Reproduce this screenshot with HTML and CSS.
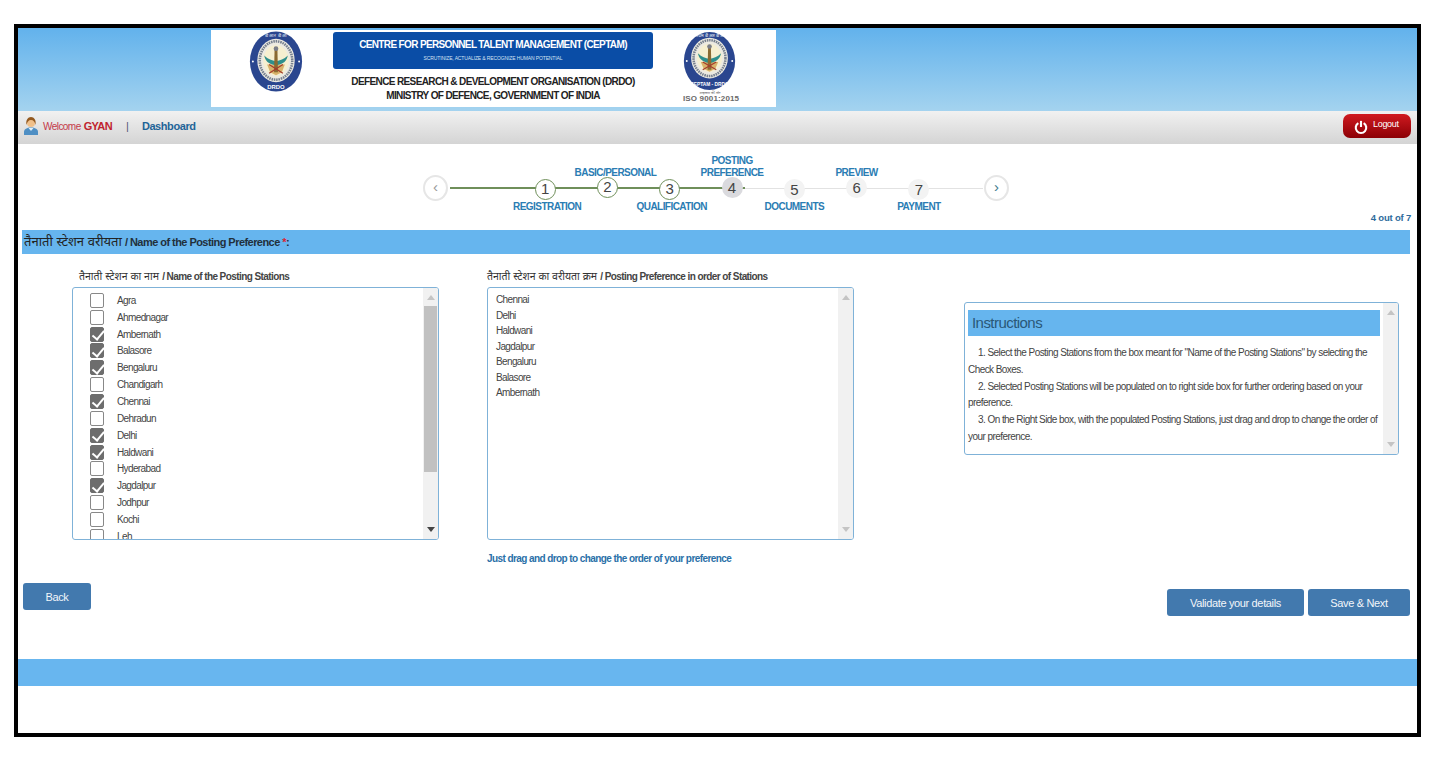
FILE: index.html
```html
<!DOCTYPE html>
<html lang="hi">
<head>
<meta charset="utf-8">
<title>Posting Preference</title>
<link rel="stylesheet" href="styles.css">
</head>
<body>
<div class="frame">
  <header class="banner">
    <div class="logo-box">
      <svg class="emblem" viewBox="0 0 54 62">
        <ellipse cx="27" cy="31" rx="26.5" ry="30.5" fill="#2a468f"/>
        <circle cx="3.5" cy="31" r="1" fill="#fff"/><circle cx="50.5" cy="31" r="1" fill="#fff"/>
        <ellipse cx="27" cy="30" rx="19" ry="22" fill="#eceae2"/>
        <ellipse cx="27" cy="30" rx="16.5" ry="19.5" fill="none" stroke="#77808f" stroke-width="2.6" stroke-dasharray="1.6 .8"/>
        <ellipse cx="27" cy="30" rx="13" ry="15.5" fill="#f6efd0"/>
        <path d="M18 34h18l-3 8-6 3-6-3z" fill="#d8b26a"/>
        <path d="M15 25c4 4 8 5 12 6 4-1 8-2 12-6-1 5-4 9-12 10-8-1-11-5-12-10z" fill="#2f8f8c"/>
        <path d="M25.6 17h2.8l.6 25h-4z" fill="#8a6a32"/>
        <circle cx="27" cy="18" r="2.4" fill="#7a7d88"/>
        <path d="M20 43l14-9M34 43l-14-9" stroke="#a33b2c" stroke-width="1.2"/>
        <text x="27" y="59" class="emblem-text" text-anchor="middle">DRDO</text>
        <text x="27" y="6.5" class="emblem-text tiny" text-anchor="middle">डी आर डी ओ</text>
      </svg>
      <div class="titles">
        <div class="title-blue">
          <div class="title-main">CENTRE FOR PERSONNEL TALENT MANAGEMENT (CEPTAM)</div>
          <div class="title-tag">SCRUTINIZE, ACTUALIZE &amp; RECOGNIZE HUMAN POTENTIAL</div>
        </div>
        <div class="title-org">DEFENCE RESEARCH &amp; DEVELOPMENT ORGANISATION (DRDO)<br>MINISTRY OF DEFENCE, GOVERNMENT OF INDIA</div>
      </div>
      <div class="iso">
        <svg class="emblem emblem-small" viewBox="0 0 54 62">
          <ellipse cx="27" cy="31" rx="26.5" ry="30" fill="#2a468f"/>
          <circle cx="3.5" cy="31" r="1" fill="#fff"/><circle cx="50.5" cy="31" r="1" fill="#fff"/>
          <ellipse cx="27" cy="28" rx="19" ry="21" fill="#eceae2"/>
          <ellipse cx="27" cy="28" rx="16.5" ry="18.5" fill="none" stroke="#77808f" stroke-width="2.6" stroke-dasharray="1.6 .8"/>
          <ellipse cx="27" cy="28" rx="13" ry="14.5" fill="#f6efd0"/>
          <path d="M18 32h18l-3 7-6 3-6-3z" fill="#d8b26a"/>
          <path d="M15 23c4 4 8 5 12 6 4-1 8-2 12-6-1 5-4 9-12 10-8-1-11-5-12-10z" fill="#2f8f8c"/>
          <path d="M25.6 15h2.8l.6 25h-4z" fill="#8a6a32"/>
          <circle cx="27" cy="16" r="2.4" fill="#7a7d88"/>
          <path d="M20 40l14-8M34 40l-14-8" stroke="#a33b2c" stroke-width="1.2"/>
          <text x="27" y="57" class="emblem-text small" text-anchor="middle">CEPTAM - DRDO</text>
          <text x="27" y="6" class="emblem-text tiny" text-anchor="middle">सेप्टम डी आर डी ओ</text>
        </svg>
        <div class="iso-note">उत्कृष्टता की ओर</div>
        <div class="iso-text">ISO 9001:2015</div>
      </div>
    </div>
  </header>

  <nav class="navbar">
    <svg class="user" viewBox="0 0 14 18">
      <path d="M0 18v-3c0-3 3-4.500 7-4.500s7 1.500 7 4.500v3z" fill="#4f8fc4"/>
      <path d="M4.500 11l2.500 3 2.500-3z" fill="#dff0fb"/>
      <circle cx="7" cy="6" r="4" fill="#f0c08a"/>
      <path d="M2.500 8C1.500 3 4 0 7 0s5.500 3 4.500 8c-.5-3-2-5-4.500-5S3 5 2.500 8z" fill="#94591f"/>
    </svg>
    <span class="welcome">Welcome</span>
    <b class="name">GYAN</b>
    <span class="sep">|</span>
    <a class="dash">Dashboard</a>
    <button class="logout">
      <svg viewBox="0 0 16 16" class="power"><path d="M5 3.600a6 6 0 1 0 6 0" fill="none" stroke="#fff" stroke-width="2.400"/><path d="M8 1v7" stroke="#fff" stroke-width="2.400"/></svg>
      <span>Logout</span>
    </button>
  </nav>

  <section class="stepper">
    <span class="arrow">&#8249;</span>
    <div class="track">
      <div class="step done up0"><span class="dot">1</span><span class="lab below nudge-r">REGISTRATION</span></div>
      <div class="step done up1"><span class="dot">2</span><span class="lab above nudge-b">BASIC/PERSONAL</span></div>
      <div class="step done up0"><span class="dot">3</span><span class="lab below nudge-r">QUALIFICATION</span></div>
      <div class="step current up1"><span class="dot">4</span><span class="lab above">POSTING<br>PREFERENCE</span></div>
      <div class="step up0"><span class="dot">5</span><span class="lab below">DOCUMENTS</span></div>
      <div class="step up1"><span class="dot">6</span><span class="lab above">PREVIEW</span></div>
      <div class="step up0"><span class="dot">7</span><span class="lab below">PAYMENT</span></div>
    </div>
    <span class="arrow">&#8250;</span>
  </section>

  <div class="count">4 out of 7</div>
  <h2 class="bar"><span class="hi">तैनाती स्टेशन वरीयता</span> <b>/ Name of the Posting Preference <i>*</i>:</b></h2>

  <main class="columns">
    <div class="col col-a">
      <label class="col-label indent"><span class="hi">तैनाती स्टेशन का नाम</span> / Name of the Posting Stations</label>
      <div class="box">
        <ul class="checks">
          <li><span class="cb"></span>Agra</li>
          <li><span class="cb"></span>Ahmednagar</li>
          <li><span class="cb on"></span>Ambernath</li>
          <li><span class="cb on"></span>Balasore</li>
          <li><span class="cb on"></span>Bengaluru</li>
          <li><span class="cb"></span>Chandigarh</li>
          <li><span class="cb on"></span>Chennai</li>
          <li><span class="cb"></span>Dehradun</li>
          <li><span class="cb on"></span>Delhi</li>
          <li><span class="cb on"></span>Haldwani</li>
          <li><span class="cb"></span>Hyderabad</li>
          <li><span class="cb on"></span>Jagdalpur</li>
          <li><span class="cb"></span>Jodhpur</li>
          <li><span class="cb"></span>Kochi</li>
          <li><span class="cb"></span>Leh</li>
        </ul>
        <div class="sb"><span class="tri up"></span><span class="thumb"></span><span class="tri down dark"></span></div>
      </div>
    </div>
    <div class="col col-b">
      <label class="col-label"><span class="hi">तैनाती स्टेशन का वरीयता क्रम</span> / Posting Preference in order of Stations</label>
      <div class="box">
        <ul class="order">
          <li>Chennai</li><li>Delhi</li><li>Haldwani</li><li>Jagdalpur</li><li>Bengaluru</li><li>Balasore</li><li>Ambernath</li>
        </ul>
        <div class="sb"><span class="tri up"></span><span class="tri down"></span></div>
      </div>
      <p class="hint">Just drag and drop to change the order of your preference</p>
    </div>
    <aside class="instructions">
      <div class="ins-body">
        <h3>Instructions</h3>
        <p>1. Select the Posting Stations from the box meant for "Name of the Posting Stations" by selecting the Check Boxes.</p>
        <p>2. Selected Posting Stations will be populated on to right side box for further ordering based on your preference.</p>
        <p>3. On the Right Side box, with the populated Posting Stations, just drag and drop to change the order of your preference.</p>
      </div>
      <div class="sb"><span class="tri up"></span><span class="tri down"></span></div>
    </aside>
  </main>

  <div class="actions">
    <button class="btn back">Back</button>
    <div class="right">
      <button class="btn validate">Validate your details</button>
      <button class="btn save">Save &amp; Next</button>
    </div>
  </div>

  <footer class="foot"></footer>
</div>
</body>
</html>
```
FILE: styles.css
```css
* { box-sizing: border-box; }
html, body { margin: 0; padding: 0; background: #fff; }
body { font-family: "Liberation Sans", "Noto Sans", sans-serif; color: #444; height: 780px; overflow: hidden; padding: 24px 0 0 14px; }
button { font-family: inherit; border: 0; cursor: pointer; }
ul { list-style: none; margin: 0; padding: 0; }

.frame { width: 1407px; height: 713px; border: 4px solid #000; background: #fff; display: flex; flex-direction: column; }

.banner { height: 83px; background: linear-gradient(#62b2ec, #a4d3ef); padding: 2px 0 0 193px; flex: none; }
.logo-box { width: 565px; height: 77px; background: #fff; display: flex; }
.emblem { width: 54px; height: 61px; margin: 1px 0 0 38px; flex: none; }
.emblem-text { font: bold 6px "Liberation Sans", sans-serif; fill: #fff; }
.emblem-text.small { font-size: 5px; }
.emblem-text.tiny { font-size: 4.500px; font-weight: normal; }
.titles { width: 320px; margin-left: 30px; flex: none; padding-top: 2px; }
.title-blue { height: 37px; background: #0a4da6; border-radius: 3px; color: #fff; text-align: center; padding-top: 7px; }
.title-main { font-size: 10px; font-weight: bold; letter-spacing: -.64px; line-height: 12px; }
.title-tag { font-size: 5px; line-height: 8px; margin-top: 3px; color: #d5e2f2; letter-spacing: -.12px; }
.title-org { font-size: 10px; font-weight: bold; line-height: 13.500px; color: #222; text-align: center; margin-top: 6px; letter-spacing: -.62px; }
.iso { margin-left: 30px; width: 54px; position: relative; }
.emblem-small { margin: 1px 0 0 0; display: block; width: 53px; height: 60px; }
.iso-note { font-size: 3.500px; line-height: 4px; color: #555; text-align: center; white-space: nowrap; margin-top: 0; }
.iso-text { font-size: 8px; font-weight: bold; color: #6a6a6a; line-height: 8px; white-space: nowrap; letter-spacing: .15px; text-align: center; }

.navbar { height: 33px; background: linear-gradient(#f1f1f1, #d4d4d4); display: flex; align-items: center; padding: 0 6px 3px 6px; flex: none; }
.user { width: 14px; height: 18px; margin-right: 5px; }
.welcome { color: #c43a4a; font-size: 10px; letter-spacing: -.55px; }
.name { color: #c0242e; font-size: 11px; margin-left: 3px; letter-spacing: -.6px; }
.sep { color: #557; font-size: 11px; margin: 0 13px 0 14px; }
.dash { color: #1f6498; font-size: 11px; font-weight: bold; letter-spacing: -.42px; }
.logout { margin-left: auto; width: 68px; height: 24px; border-radius: 7px; background: linear-gradient(#d01a20, #8c0006); color: #fff; display: flex; align-items: center; padding: 0 0 0 11px; font-size: 9px; letter-spacing: -.3px; }
.power { width: 14px; height: 14px; margin-right: 5px; margin-top: 2px; }
.logout span { margin-top: -4px; }

.stepper { height: 68px; padding: 31px 0 0 405px; display: flex; align-items: flex-start; flex: none; }
.arrow { width: 25px; height: 26px; border-radius: 50%; border: 2px solid #e6e6e6; color: #999; display: flex; align-items: center; justify-content: center; font-size: 15px; line-height: 1; padding-bottom: 3px; flex: none; background: #fff; }
.arrow:last-child { color: #3d7a8c; }
.track { width: 533px; margin: 0 1px 0 2px; height: 26px; display: flex; padding-left: 64px; background: linear-gradient(#6f8f5a, #6f8f5a) 0 12px / 295px 2px no-repeat, linear-gradient(#e2e2e2, #e2e2e2) 0 13px / 100% 1px no-repeat; }
.step { width: 62.300px; flex: none; position: relative; display: flex; justify-content: center; }
.dot { width: 21px; height: 21px; border-radius: 50%; background: #f3f3f3; color: #444; font-size: 15px; line-height: 21px; text-align: center; }
.up0 .dot { margin-top: 4px; }
.up1 .dot { margin-top: 2px; }
.done .dot { background: #fff; border: 1.500px solid #6f8f5a; line-height: 18px; }
.current .dot { background: #dadade; }
.lab { position: absolute; left: -30px; right: -30px; text-align: center; color: #2a7cb3; font-size: 10px; font-weight: bold; line-height: 11.500px; letter-spacing: -.55px; white-space: nowrap; }
.lab.nudge-r { left: -28px; right: -32px; }
.lab.nudge-b { left: -22px; right: -38px; }
.lab.below { top: 26px; }
.lab.above { bottom: 23px; }

.count { height: 18px; flex: none; margin: 0 6px 0 0; text-align: right; font-size: 9.500px; font-weight: bold; color: #2e6b9c; line-height: 12px; letter-spacing: -.2px; }
.bar { margin: 0 7px 0 4px; flex: none; height: 24px; background: #66b5ee; color: #222; font-size: 11px; font-weight: normal; line-height: 23px; padding-left: 2px; white-space: nowrap; }
.bar .hi { font-size: 13px; }
.bar b { letter-spacing: -.55px; color: #22303c; }
.bar i { color: #d23; font-style: normal; }

.columns { display: flex; align-items: flex-start; padding: 15px 0 0 54px; flex: none; height: 329px; }
.col { width: 367px; flex: none; }
.col-b { margin-left: 48px; }
.col-label { display: block; height: 18px; font-size: 10px; font-weight: bold; line-height: 14px; color: #444; letter-spacing: -.58px; white-space: nowrap; }
.col-label .hi { font-weight: normal; font-size: 10.500px; letter-spacing: 0; color: #333; margin-right: 1px; }
.col-label.indent { padding-left: 7px; }
.box { height: 253px; border: 1px solid #7fb2d8; border-radius: 3px; display: flex; overflow: hidden; background: #fff; }
.checks { flex: 1; padding: 4px 0 0 17px; overflow: hidden; }
.checks li { display: flex; align-items: center; height: 16.850px; font-size: 10px; letter-spacing: -.62px; color: #444; }
.cb { width: 14px; height: 15px; border: 1px solid #888; border-radius: 2px; margin-right: 13px; background: #fff; flex: none; position: relative; }
.cb.on { background: #6d6d6d; border-color: #6d6d6d; }
.cb.on::after { content: ""; position: absolute; left: 3.500px; top: .5px; width: 5px; height: 9.500px; border: solid #fff; border-width: 0 2px 2px 0; transform: rotate(40deg); }
.order { flex: 1; padding: 4px 0 0 8px; }
.order li { height: 15.500px; line-height: 15.500px; font-size: 10px; letter-spacing: -.62px; color: #444; }

.sb { width: 15px; flex: none; background: #f1f1f1; display: flex; flex-direction: column; align-items: center; padding: 7px 0; }
.thumb { width: 13px; height: 166px; background: #c1c1c1; margin-top: 6px; align-self: center; }
.tri { width: 0; height: 0; border-left: 4px solid transparent; border-right: 4px solid transparent; flex: none; }
.tri.up { border-bottom: 5px solid #c4c4c4; }
.tri.down { border-top: 5px solid #c4c4c4; margin-top: auto; }
.tri.dark { border-top-color: #444; }

.hint { margin: 12px 0 0; font-size: 10px; font-weight: bold; color: #2a70a8; line-height: 13px; letter-spacing: -.58px; white-space: nowrap; }

.instructions { width: 435px; height: 153px; margin: 33px 0 0 110px; border: 1px solid #7fb2d8; border-radius: 3px; display: flex; flex: none; overflow: hidden; }
.ins-body { width: 415px; flex: none; padding: 7px 0 0 3px; }
.ins-body h3 { margin: 0 0 9px; height: 26px; background: #66b5ee; color: #2a5878; font-size: 15px; font-weight: normal; line-height: 25px; padding-left: 4px; letter-spacing: -.55px; }
.ins-body p { margin: 0; font-size: 10px; line-height: 16.800px; text-indent: 10px; color: #444; letter-spacing: -.56px; }
.instructions .sb { margin-left: 3px; }

.actions { display: flex; justify-content: space-between; align-items: flex-start; padding: 0 7px 0 5px; height: 76px; flex: none; }
.btn { background: #4279ae; color: #f2f6fa; border-radius: 3px; font-size: 11px; letter-spacing: -.35px; flex: none; }
.back { width: 68px; height: 27px; }
.right { display: flex; gap: 4px; margin-top: 6px; }
.validate { width: 137px; height: 27px; }
.save { width: 102px; height: 27px; }

.foot { height: 27px; background: #68b6ef; flex: none; }
```
